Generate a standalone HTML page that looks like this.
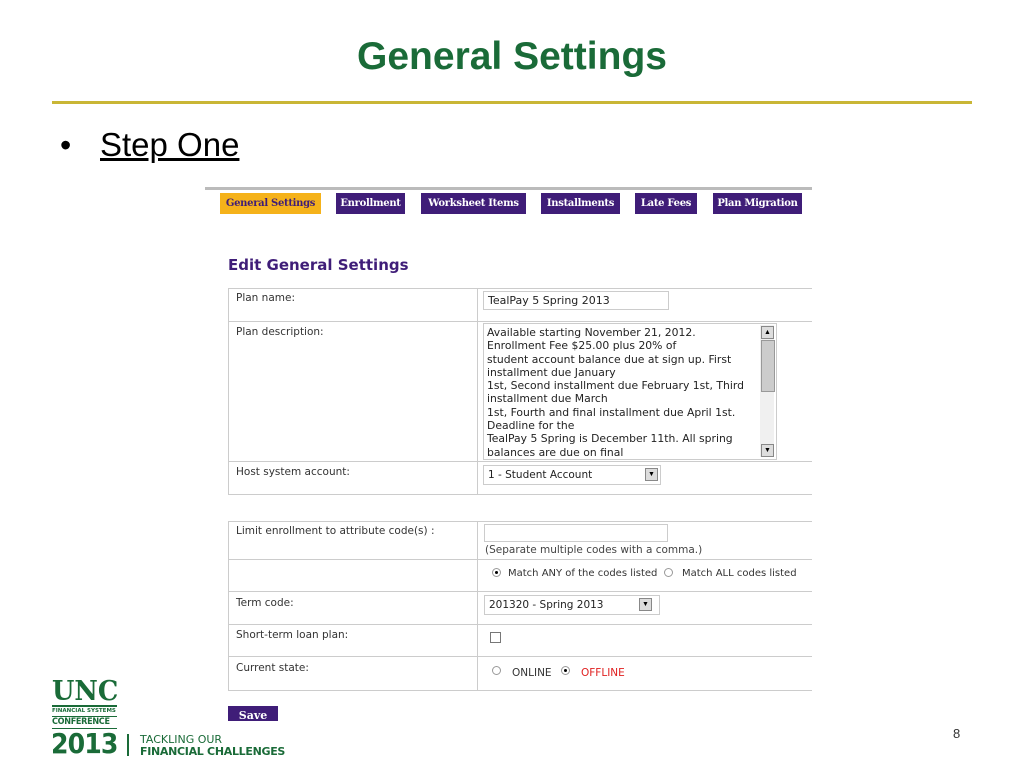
<!DOCTYPE html>
<html><head><meta charset="utf-8"><style>
body{margin:0;width:1024px;height:768px;background:#fff;position:relative;overflow:hidden;font-family:"Liberation Sans",sans-serif}
.a{position:absolute}
.tab{position:absolute;top:193px;height:21px;background:#3f1d78;color:#fff;font:bold 10px "DejaVu Serif",serif;line-height:21px;text-align:center;white-space:nowrap;overflow:hidden;letter-spacing:-0.3px}
.lab{position:absolute;left:236px;font:10.5px "DejaVu Sans",sans-serif;color:#333;white-space:nowrap}
.val{position:absolute;font:10.5px "DejaVu Sans",sans-serif;color:#222;white-space:nowrap}
.hl{position:absolute;left:228px;width:584px;height:1px;background:#ccc}
.vl{position:absolute;width:1px;background:#ccc}
.box{position:absolute;border:1px solid #ccc;background:#fff}
.sel{position:absolute;border:1px solid #ccc;background:#fff;font:10.5px "DejaVu Sans",sans-serif;padding-left:4px;line-height:18px;color:#222}
.btn{position:absolute;width:11px;height:11px;background:#ddd;border:1px solid #888;font-size:7px;line-height:11px;text-align:center}
.rad{position:absolute;width:7px;height:7px;border:1px solid #999;border-radius:50%}
.rad.on::after{content:"";position:absolute;left:2px;top:2px;width:3px;height:3px;background:#000;border-radius:50%}
</style></head><body>
<div class="a" style="left:0;width:1024px;top:35px;text-align:center;font-weight:bold;font-size:39px;color:#1a6b38">General Settings</div>
<div class="a" style="left:52px;top:101px;width:920px;height:3px;background:#c9b635"></div>
<div class="a" style="left:60px;top:127px;font-size:32px;color:#000">•</div>
<div class="a" style="left:100px;top:126px;font-size:33px;color:#000;text-decoration:underline">Step One</div>

<div class="a" style="left:205px;top:187px;width:607px;height:3px;background:#bbb"></div>
<div class="tab" style="left:220px;width:101px;background:#f5b21a;color:#3f1d78">General Settings</div>
<div class="tab" style="left:336px;width:69px">Enrollment</div>
<div class="tab" style="left:421px;width:105px">Worksheet Items</div>
<div class="tab" style="left:541px;width:79px">Installments</div>
<div class="tab" style="left:635px;width:62px">Late Fees</div>
<div class="tab" style="left:713px;width:89px">Plan Migration</div>

<div class="a" style="left:228px;top:256px;font:bold 15px 'DejaVu Sans',sans-serif;color:#3f1d78">Edit General Settings</div>

<div class="hl" style="top:288px"></div><div class="hl" style="top:321px"></div><div class="hl" style="top:461px"></div><div class="hl" style="top:494px"></div>
<div class="vl" style="left:228px;top:288px;height:207px"></div><div class="vl" style="left:477px;top:288px;height:207px"></div>
<div class="lab" style="top:292px">Plan name:</div>
<div class="box" style="left:483px;top:291px;width:184px;height:17px"></div>
<div class="val" style="left:488px;top:294px;font-size:11px">TealPay 5 Spring 2013</div>
<div class="lab" style="top:326px">Plan description:</div>
<div class="box" style="left:483px;top:323px;width:292px;height:135px"></div>
<div class="val" style="left:487px;top:326px;line-height:13.3px;font-size:10.8px">Available starting November 21, 2012.<br>Enrollment Fee $25.00 plus 20% of<br>student account balance due at sign up. First<br>installment due January<br>1st, Second installment due February 1st, Third<br>installment due March<br>1st, Fourth and final installment due April 1st.<br>Deadline for the<br>TealPay 5 Spring is December 11th. All spring<br>balances are due on final</div>
<div class="a" style="left:760px;top:325px;width:14px;height:132px;background:#f0f0f0"></div>
<div class="btn" style="left:761px;top:326px">▲</div><div class="a" style="left:761px;top:340px;width:12px;height:50px;background:#ccc;border:1px solid #999"></div><div class="btn" style="left:761px;top:444px">▼</div>
<div class="lab" style="top:466px">Host system account:</div>
<div class="sel" style="left:483px;top:465px;width:172px">1 - Student Account</div>
<div class="btn" style="left:645px;top:468px">▼</div>

<div class="hl" style="top:521px"></div><div class="hl" style="top:559px"></div><div class="hl" style="top:591px"></div><div class="hl" style="top:624px"></div><div class="hl" style="top:656px"></div><div class="hl" style="top:690px"></div>
<div class="vl" style="left:228px;top:521px;height:170px"></div><div class="vl" style="left:477px;top:521px;height:170px"></div>
<div class="lab" style="top:525px">Limit enrollment to attribute code(s) :</div>
<div class="box" style="left:484px;top:524px;width:182px;height:16px"></div>
<div class="val" style="left:485px;top:544px;color:#444">(Separate multiple codes with a comma.)</div>
<div class="rad on" style="left:492px;top:568px"></div>
<div class="val" style="left:508px;top:568px;color:#333;font-size:10px">Match ANY of the codes listed</div>
<div class="rad" style="left:664px;top:568px"></div>
<div class="val" style="left:682px;top:568px;color:#333;font-size:10px">Match ALL codes listed</div>
<div class="lab" style="top:597px">Term code:</div>
<div class="sel" style="left:484px;top:595px;width:170px">201320 - Spring 2013</div>
<div class="btn" style="left:639px;top:598px">▼</div>
<div class="lab" style="top:629px">Short-term loan plan:</div>
<div class="a" style="left:490px;top:632px;width:9px;height:9px;border:1px solid #777"></div>
<div class="lab" style="top:662px">Current state:</div>
<div class="rad" style="left:492px;top:666px"></div>
<div class="val" style="left:512px;top:667px;color:#333">ONLINE</div>
<div class="rad on" style="left:561px;top:666px"></div>
<div class="val" style="left:581px;top:667px;color:#e02020">OFFLINE</div>

<div class="a" style="left:228px;top:706px;width:50px;height:15px;background:#3f1d78;color:#fff;font:bold 11px 'DejaVu Serif',serif;text-align:center;line-height:20px;overflow:hidden">Save</div>

<div class="a" style="left:52px;top:676px;font:900 27px 'DejaVu Serif',serif;color:#1a6b38;transform:scaleX(0.95);transform-origin:left">UNC</div>
<div class="a" style="left:52px;top:705px;width:65px;height:2px;background:#1a6b38"></div>
<div class="a" style="left:52px;top:708px;font:bold 5.5px 'DejaVu Sans',sans-serif;color:#1a6b38">FINANCIAL SYSTEMS</div>
<div class="a" style="left:52px;top:716px;width:65px;height:1px;background:#1a6b38"></div>
<div class="a" style="left:52px;top:717px;font:bold 9px 'DejaVu Sans Condensed','DejaVu Sans',sans-serif;color:#1a6b38;letter-spacing:-0.3px">CONFERENCE</div>
<div class="a" style="left:52px;top:728px;width:65px;height:1px;background:#1a6b38"></div>
<div class="a" style="left:51px;top:727px;font:900 28px 'DejaVu Sans',sans-serif;color:#1a6b38;letter-spacing:-1px;transform:scaleX(0.9);transform-origin:left">2013</div>
<div class="a" style="left:127px;top:734px;width:2px;height:22px;background:#1a6b38"></div>
<div class="a" style="left:140px;top:733px;font:11px 'DejaVu Sans',sans-serif;color:#1a6b38">TACKLING OUR</div>
<div class="a" style="left:140px;top:745px;font:bold 11px 'DejaVu Sans',sans-serif;color:#1a6b38;letter-spacing:-0.3px">FINANCIAL CHALLENGES</div>
<div class="a" style="left:953px;top:726px;font-size:13px;color:#333">8</div>
</body></html>
